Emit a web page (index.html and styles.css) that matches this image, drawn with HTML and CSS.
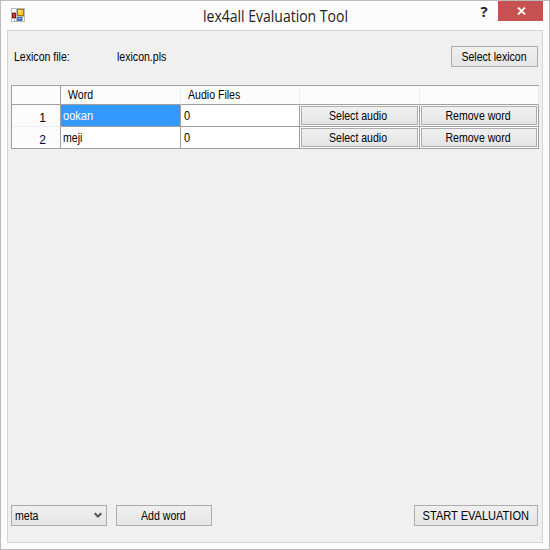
FILE: index.html
```
<!DOCTYPE html>
<html lang="en">
<head>
<meta charset="utf-8">
<title>lex4all Evaluation Tool</title>
<link rel="stylesheet" href="styles.css">
</head>
<body>
<div class="window">
  <header class="titlebar">
    <svg class="app-icon" width="14" height="14" viewBox="0 0 14 14" shape-rendering="crispEdges">
      <path fill="#b9b9b9" d="M0 0h14v14H0z"/>
      <path fill="#fff" d="M1 1h4v3H1zM1 11h2v2H1zM4 11h1v2H4zM12 9h1v4h-1z"/>
      <path fill="#8f1010" d="M1 5h4v5H1z"/><path fill="#d6402f" d="M2 6h2v3H2z"/>
      <path fill="#a87408" d="M6 1h7v7H6z"/><path fill="#ffc83a" d="M7 2h5v5H7z"/><path fill="#ffe68c" d="M7 2h3v2H7z"/>
      <path fill="#3c6fd0" d="M6 9h5v4H6z"/><path fill="#80b0ff" d="M7 10h3v1H7z"/>
    </svg>
    <h1 class="title"><span>lex4all Evaluation Tool</span></h1>
    <div class="help">?</div>
    <div class="close"><svg width="9" height="8" viewBox="0 0 9 8"><path d="M1 .5L8 7.5M8 .5L1 7.5" stroke="#fff" stroke-width="1.8"/></svg></div>
  </header>
  <main class="client">
    <div class="file-row">
      <div class="file-label"><span class="narrow">Lexicon file:</span></div>
      <div class="file-name"><span class="narrow">lexicon.pls</span></div>
      <button class="btn select-lexicon"><span class="narrow">Select lexicon</span></button>
    </div>
    <div class="grid">
      <div class="head corner"></div>
      <div class="head"><span class="narrow">Word</span></div>
      <div class="head"><span class="narrow">Audio Files</span></div>
      <div class="head"></div>
      <div class="head"></div>
      <div class="row-head">1</div>
      <div class="cell selected"><span class="narrow wide">ookan</span></div>
      <div class="cell count"><span class="narrow wide">0</span></div>
      <div class="cell action"><button class="btn"><span class="narrow">Select audio</span></button></div>
      <div class="cell action"><button class="btn"><span class="narrow">Remove word</span></button></div>
      <div class="row-head end">2</div>
      <div class="cell"><span class="narrow">meji</span></div>
      <div class="cell count"><span class="narrow wide">0</span></div>
      <div class="cell action"><button class="btn"><span class="narrow">Select audio</span></button></div>
      <div class="cell action"><button class="btn"><span class="narrow">Remove word</span></button></div>
    </div>
    <footer class="actions">
      <button class="btn combo"><span class="narrow">meta</span><svg width="8" height="7" viewBox="0 0 8 7"><path d="M.7 1.2L4 4.5L7.3 1.2" fill="none" stroke="#555" stroke-width="2.1"/></svg></button>
      <button class="btn add"><span class="narrow">Add word</span></button>
      <button class="btn start"><span class="narrow wide">START EVALUATION</span></button>
    </footer>
  </main>
</div>
</body>
</html>
```
FILE: styles.css
```
* { box-sizing: border-box; }
body { margin: 0; font: 12px/14px "Liberation Sans", Arial, sans-serif; color: #000; }
.window { width: 550px; height: 550px; border: 1px solid #bbb; background: #fcfcfc; padding: 0 6px 6px; display: flex; flex-direction: column; }
.titlebar { height: 29px; display: flex; align-items: flex-start; }
.app-icon { margin: 7px 0 0 4px; display: block; }
.title { flex: 1; margin: 5px 0 0 177.5px; font: 16px/20px "Open Sans", "Noto Sans", sans-serif; color: #222; white-space: nowrap; }
.title span { display: inline-block; transform: scaleX(.875); transform-origin: left; }
.help { width: 28px; font: bold 15px/20px "Open Sans", sans-serif; color: #222; text-align: center; }
.close { width: 45px; height: 20px; background: #c75050; display: flex; align-items: center; justify-content: center; padding-left: 1px; }
.client { width: 536px; height: 513px; background: #f0f0f0; border: 1px solid #d5d5d5; padding: 15px 4px 16px 3px; display: flex; flex-direction: column; }
.file-row { display: flex; height: 21px; margin-bottom: 18px; align-items: center; }
.file-label { width: 103px; padding-left: 3px; }
.file-name { flex: 1; padding-left: 3px; }
.narrow { display: inline-block; white-space: nowrap; transform: scaleX(.88); transform-origin: left; }
.wide { transform: scaleX(.92); }
.btn { font: inherit; color: #000; padding: 0; height: 21px; border: 1px solid #acacac; background: linear-gradient(#f0f0f0, #e5e5e5); display: flex; align-items: center; justify-content: center; border-radius: 0; }
.btn .narrow { transform-origin: center; }
.select-lexicon { width: 87px; padding-right: 1px; }
.grid { display: grid; grid-template-columns: 49px 120px 119px 120px 119px; grid-template-rows: 19px 22px 22px; border: 1px solid #a0a0a0; border-width: 1px 0 0 1px; width: 528px; }
.head { background: #fcfcfc; border-bottom: 1px solid #a0a0a0; border-right: 1px solid #e3eefa; padding: 2px 0 0 7px; }
.corner { border-right-color: #a0a0a0; }
.row-head { background: #fcfcfc; border-right: 1px solid #a0a0a0; border-bottom: 1px solid #e9f0f8; text-align: right; padding: 6px 14px 0 0; }
.end { border-bottom-color: #a0a0a0; color: #000040; }
.cell { background: #fff; border: 1px solid #a0a0a0; border-width: 0 1px 1px 0; padding: 4px 0 0 2px; }
.count { padding-left: 3px; }
.selected { background: #39f; color: #fff; }
.action { padding: 1px; }
.action .btn { width: 100%; height: 19px; padding-right: 2px; }
.actions { margin-top: auto; display: flex; gap: 9px; }
.combo { width: 96px; justify-content: space-between; padding: 0 4px 0 3px; }
.combo .narrow { transform-origin: left; }
.add { width: 96px; padding-right: 2px; }
.start { width: 124px; margin-left: auto; }
```
